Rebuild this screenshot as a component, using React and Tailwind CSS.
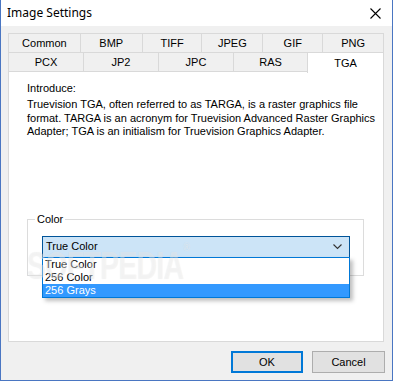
import { useState } from "react";

const row1 = [
  { label: "Common", w: "w-[72px]" },
  { label: "BMP", w: "w-[62px]" },
  { label: "TIFF", w: "w-[60px]" },
  { label: "JPEG", w: "w-[61px]" },
  { label: "GIF", w: "w-[60px]" },
  { label: "PNG", w: "w-[61px]" },
];

const row2 = [
  { label: "PCX", w: "w-[75px]" },
  { label: "JP2", w: "w-[75px]" },
  { label: "JPC", w: "w-[75px]" },
  { label: "RAS", w: "w-[74px]" },
];

const options = ["True Color", "256 Color", "256 Grays"];

const Tab = ({ label, w }) => (
  <div
    className={`${w} h-[19px] flex items-center justify-center border-l border-t border-[#d9d9d9] bg-[#f0f0f0] text-[11px] text-black`}
  >
    {label}
  </div>
);

const App = () => {
  const [hovered] = useState(2);

  return (
    <div className="w-[393px] h-[381px] bg-[#f0f0f0] border-x border-b border-[#4a76c2] flex flex-col font-['Liberation_Sans',Arial,sans-serif] text-black select-none">
      {/* Title bar */}
      <div className="h-[26px] bg-white flex items-center justify-between pl-[6px] pr-[11px]">
        <span className="text-[12px] font-['Noto_Sans',sans-serif] text-black">Image Settings</span>
        <svg width="11" height="11" viewBox="0 0 11 11" className="text-black">
          <path d="M0.5 0.5 L10.5 10.5 M10.5 0.5 L0.5 10.5" stroke="currentColor" strokeWidth="1.1" />
        </svg>
      </div>

      {/* Body */}
      <div className="flex-1 flex flex-col px-[7px] pt-[7px]">
        {/* Tabs */}
        <div className="flex w-[376px] border-r border-[#d9d9d9]">
          {row1.map((t) => (
            <Tab key={t.label} {...t} />
          ))}
        </div>
        <div className="flex w-[376px] items-end relative z-10">
          {row2.map((t) => (
            <Tab key={t.label} {...t} />
          ))}
          <div className="w-[77px] h-[21px] -mt-[1px] mb-[-2px] bg-white border-x border-t border-[#d9d9d9] flex justify-center pt-[2px] text-[11px]">
            TGA
          </div>
        </div>

        {/* Panel */}
        <div className="w-[376px] h-[271px] bg-white border border-[#d9d9d9] pl-[18px] pt-[10px] relative">
          <p className="text-[11px] leading-[13px]">Introduce:</p>
          <p className="text-[11px] leading-[13.5px] mt-[3px]">
            Truevision TGA, often referred to as TARGA, is a raster graphics file
            <br />
            format. TARGA is an acronym for Truevision Advanced Raster Graphics
            <br />
            Adapter; TGA is an initialism for Truevision Graphics Adapter.
          </p>

          {/* Group box */}
          <div className="relative mt-[80px] w-[337px] h-[57px] border border-[#dcdcdc]">
            <span className="absolute -top-[8px] left-[7px] bg-white px-[2px] text-[11px] leading-[14px]">
              Color
            </span>
            <div className="relative ml-[14px] mt-[16px] w-[308px]">
              <div className="h-[22px] bg-[#cce4f7] border border-[#005499] flex items-center justify-between pl-[3px] pr-[7px] text-[11px]">
                <span>True Color</span>
                <svg width="9" height="6" viewBox="0 0 9 6">
                  <path d="M0.5 0.5 L4.5 4.5 L8.5 0.5" fill="none" stroke="#333" strokeWidth="1.1" />
                </svg>
              </div>
              {/* Dropdown list */}
              <div className="absolute top-[21px] left-0 w-[308px] bg-white border border-[#0078d7] shadow-[3px_3px_4px_rgba(0,0,0,0.25)] z-20">
                {options.map((o, i) => (
                  <div
                    key={o}
                    className={`h-[13px] leading-[13px] pl-[2px] text-[11px] ${
                      i === hovered ? "bg-[#3399ff] text-white" : "text-black"
                    }`}
                  >
                    {o}
                  </div>
                ))}
              </div>
            </div>
          </div>

          {/* Watermark */}
          <div className="absolute left-[18px] top-[166px] z-30 origin-left scale-x-75 text-[38px] font-bold tracking-[-1px] text-white/40 [text-shadow:0_0_1px_rgba(0,0,0,0.08)] pointer-events-none">
            SOFTPEDIA<span className="text-[12px] align-top">®</span>
          </div>
        </div>

        {/* Buttons */}
        <div className="flex justify-end gap-[9px] mt-[9px]">
          <button className="w-[72px] h-[22px] bg-[#e1e1e1] border-2 border-[#0078d7] text-[11px]">
            OK
          </button>
          <button className="w-[73px] h-[22px] bg-[#e1e1e1] border border-[#adadad] text-[11px]">
            Cancel
          </button>
        </div>
      </div>
    </div>
  );
};

export default App;
